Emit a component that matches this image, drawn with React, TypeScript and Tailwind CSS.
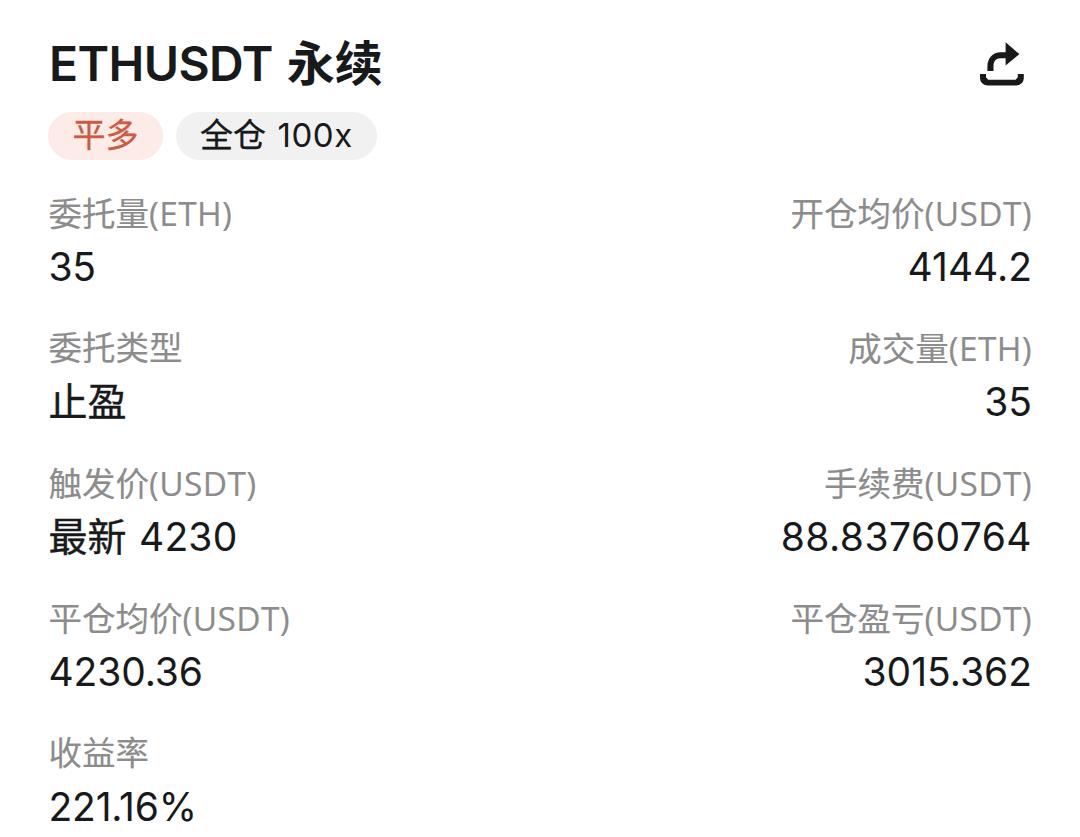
import React from 'react';
import clsx from 'clsx';

interface Field {
  label: string;
  unit?: string;
  prefix?: string;
  value?: string;
  tracking?: string;
}

const leftFields: Field[] = [
  { label: '委托量', unit: '(ETH)', value: '35', tracking: 'tracking-[-0.4px]' },
  { label: '委托类型', prefix: '止盈' },
  { label: '触发价', unit: '(USDT)', prefix: '最新', value: '4230', tracking: 'tracking-[0.2px]' },
  { label: '平仓均价', unit: '(USDT)', value: '4230.36', tracking: 'tracking-[-0.1px]' },
  { label: '收益率', value: '221.16%', tracking: 'tracking-[-0.2px]' },
];

const rightFields: Field[] = [
  { label: '开仓均价', unit: '(USDT)', value: '4144.2' },
  { label: '成交量', unit: '(ETH)', value: '35' },
  { label: '手续费', unit: '(USDT)', value: '88.83760764', tracking: 'tracking-[0.45px]' },
  { label: '平仓盈亏', unit: '(USDT)', value: '3015.362' },
];

const ShareIcon: React.FC = () => (
  <svg width="46" height="46" viewBox="0 0 46 46">
    <path d="M8.4 31V26.5C8.4 17.8 14 12.2 21.5 12.2H26.6V2.2L40.4 14.1L26.6 25.4V18.2H21.5C17 18.2 14.5 21 14.5 26V31Z" fill="#18191a" />
    <path d="M1 34H7V37.2L9.2 39.7H36.6L38.8 37.2V34H44.8V38.2Q44.4 44.6 37.4 45.6H8.4Q1.4 44.6 1 38.2Z" fill="#18191a" />
  </svg>
);

const FieldItem: React.FC<{ field: Field; alignRight?: boolean }> = ({ field, alignRight }) => (
  <div className={clsx('h-[104px] whitespace-nowrap', alignRight && 'text-right')}>
    <div className="h-[50px] leading-[49px] text-[33.5px] text-[#8c8c8c] [-webkit-text-stroke:0.15px_#8c8c8c]">
      {field.label}
      {field.unit && <span className="font-['Open_Sans'] tracking-[0.35px]">{field.unit}</span>}
    </div>
    <div className="h-[54px] leading-[56px] text-[39px] text-[#18191a]">
      {field.prefix && <span className="[-webkit-text-stroke:0.4px_#18191a]">{field.prefix}</span>}
      {field.prefix && field.value && <span className="tracking-[1.5px]"> </span>}
      {field.value && <span className={field.tracking}>{field.value}</span>}
    </div>
  </div>
);

const App: React.FC = () => {
  return (
    <div className="h-[837px] w-[1080px] overflow-hidden bg-white pl-12 pr-[48px] pt-[34px] font-['Inter','Noto_Sans_CJK_SC',sans-serif]">
      <header className="flex h-[60px] items-center justify-between">
        <h1 className="pl-px whitespace-nowrap text-[48px] font-semibold leading-[60px] text-[#18191a]">
          <span className="tracking-[-0.6px]">ETHUSDT</span> <span className="ml-0.5">永续</span>
        </h1>
        <div className="mr-[7px] mb-0.5">
          <ShareIcon />
        </div>
      </header>
      <div className="mt-[18px] flex gap-[13px]">
        <div className="h-12 w-[115px] rounded-full bg-[#fdebe7] text-center text-[33px] leading-[46px] text-[#cb5b42] [-webkit-text-stroke:0.3px_#cb5b42]">
          平多
        </div>
        <div className="h-12 w-[201px] whitespace-nowrap rounded-full bg-[#f1f1f1] text-center text-[33px] leading-[47px] text-[#18191a]">
          <span className="[-webkit-text-stroke:0.3px_#18191a]">全仓</span>{' '}
          <span className="ml-0.5 tracking-[0.6px]">100x</span>
        </div>
      </div>
      <main className="mt-[29px] flex justify-between pl-[0.5px]">
        <div className="flex flex-col gap-[31px]">
          {leftFields.map((field) => (
            <FieldItem key={field.label} field={field} />
          ))}
        </div>
        <div className="flex flex-col gap-[31px]">
          {rightFields.map((field) => (
            <FieldItem key={field.label} field={field} alignRight />
          ))}
        </div>
      </main>
    </div>
  );
};

export default App;
